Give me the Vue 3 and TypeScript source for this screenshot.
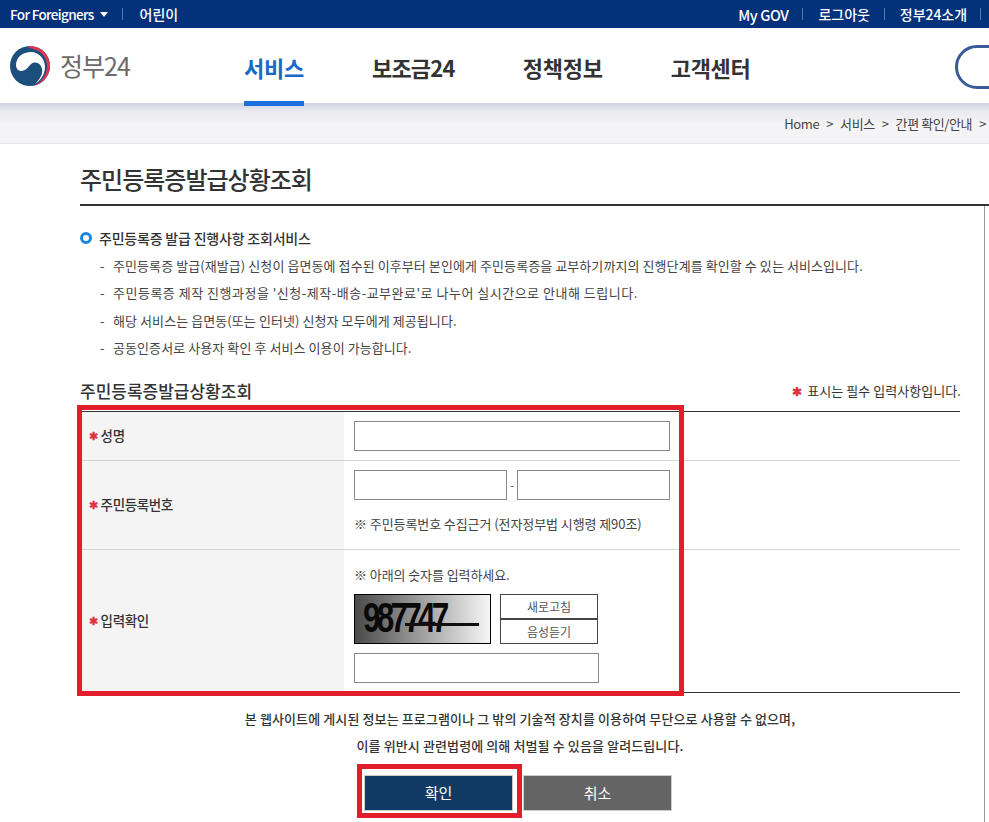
<script setup lang="ts">
const notes: string[] = [
  '주민등록증 발급(재발급) 신청이 읍면동에 접수된 이후부터 본인에게 주민등록증을 교부하기까지의 진행단계를 확인할 수 있는 서비스입니다.',
  "주민등록증 제작 진행과정을 '신청-제작-배송-교부완료'로 나누어 실시간으로 안내해 드립니다.",
  '해당 서비스는 읍면동(또는 인터넷) 신청자 모두에게 제공됩니다.',
  '공동인증서로 사용자 확인 후 서비스 이용이 가능합니다.',
]
const navItems: string[] = ['서비스', '보조금24', '정책정보', '고객센터']
</script>

<template>
  <div class="page">
    <div class="topbar">
      <div class="top-left">
        <span class="foreign">For Foreigners</span>
        <span class="caret"></span>
        <span class="sep"></span>
        <span>어린이</span>
      </div>
      <div class="top-right">
        <span class="mygov">My GOV</span><span class="sep"></span>
        <span>로그아웃</span><span class="sep"></span>
        <span>정부24소개</span><span class="sep"></span>
      </div>
    </div>

    <header class="header">
      <div class="logo">
        <svg width="42" height="42" viewBox="0 0 42 42">
          <circle cx="21" cy="21" r="20" fill="#1d4f7c" />
          <path d="M20 1C31 .5 41 9.500 41 21c0 9-6.500 17.500-17 20 8.500-3.500 14-11 14-20C38 11 30 4 20 3z" fill="#e3344f" />
          <path d="M7 20C7 12 14 7 22 7c8 0 14 7 14 15 0 7-4 13-10 17 5-5 8-10 7-15-1-6-7-8-11-5-3 3-5 7-10 7-3 0-5-3-5-6z" fill="#fff" />
        </svg>
        <span class="logo-text">정부24</span>
      </div>
      <nav class="nav">
        <a v-for="(item, i) in navItems" :key="item" class="nav-item" :class="{ active: i === 0 }">{{ item }}</a>
      </nav>
      <div class="search"></div>
    </header>

    <div class="crumbs">
      <span>Home</span><i>&gt;</i><span>서비스</span><i>&gt;</i><span>간편 확인/안내</span><i>&gt;</i>
    </div>

    <main class="main">
      <h1 class="title">주민등록증발급상황조회</h1>
      <div class="body">
        <div class="content">
          <div class="lead"><span class="dot"></span>주민등록증 발급 진행사항 조회서비스</div>
          <ul class="notes">
            <li v-for="n in notes" :key="n"><span class="dash">-</span>{{ n }}</li>
          </ul>

          <div class="form-head">
            <h2>주민등록증발급상황조회</h2>
            <span class="req"><b class="star">✱</b> 표시는 필수 입력사항입니다.</span>
          </div>

          <div class="table">
            <div class="row r1">
              <div class="th"><b class="star">✱</b>성명</div>
              <div class="td"><input class="inp w316" type="text" /></div>
            </div>
            <div class="row r2">
              <div class="th"><b class="star">✱</b>주민등록번호</div>
              <div class="td">
                <div class="ids"><input class="inp w153" type="text" /><span class="hy">-</span><input class="inp w153" type="text" /></div>
                <p class="hint">※ 주민등록번호 수집근거 (전자정부법 시행령 제90조)</p>
              </div>
            </div>
            <div class="row r3">
              <div class="th"><b class="star">✱</b>입력확인</div>
              <div class="td">
                <p class="hint first">※ 아래의 숫자를 입력하세요.</p>
                <div class="captcha-row">
                  <div class="captcha">
                    <span class="digits">987747</span>
                    <span class="strike"></span>
                  </div>
                  <div class="cap-btns">
                    <button type="button">새로고침</button>
                    <button type="button">음성듣기</button>
                  </div>
                </div>
                <input class="inp w245" type="text" />
              </div>
            </div>
            <div class="mark mark-table"></div>
          </div>

          <p class="legal">본 웹사이트에 게시된 정보는 프로그램이나 그 밖의 기술적 장치를 이용하여 무단으로 사용할 수 없으며,</p>
          <p class="legal second">이를 위반시 관련법령에 의해 처벌될 수 있음을 알려드립니다.</p>

          <div class="actions">
            <button type="button" class="btn ok">확인<span class="mark mark-btn"></span></button>
            <button type="button" class="btn cancel">취소</button>
          </div>
        </div>
      </div>
    </main>
  </div>
</template>

<style>
html, body { margin: 0; padding: 0; background: #fff; overflow: hidden; }
</style>

<style scoped>
.page {
  width: 989px;
  height: 822px;
  overflow: hidden;
  font-family: "Noto Sans CJK KR", "Noto Sans", sans-serif;
  color: #333;
  font-size: 12px;
}
.topbar {
  height: 28px;
  background: #03317a;
  color: #fff;
  display: flex;
  justify-content: space-between;
  align-items: center;
  padding: 0 8px 0 10px;
  font-size: 14px;
  font-weight: 500;
  letter-spacing: -0.05px;
}
.top-left, .top-right { display: flex; align-items: center; }
.foreign { font-size: 13.500px; letter-spacing: -0.65px; }
.mygov { font-size: 14.500px; letter-spacing: -0.4px; }
.caret {
  margin-left: 6px;
  border-left: 4px solid transparent;
  border-right: 4px solid transparent;
  border-top: 5px solid #fff;
}
.top-left .sep { margin: 0 17px 0 14px; }
.sep { width: 1px; height: 12px; background: #5a77a6; display: inline-block; }
.top-right .sep { margin: 0 15px 0 14px; }
.top-right .sep:last-child { margin: 0 0 0 13px; }
.header {
  height: 75px;
  background: #fff;
  display: flex;
  position: relative;
}
.logo { display: flex; align-items: center; width: 244px; padding: 0 0 0 9px; box-sizing: border-box; height: 75px; }
.logo svg { margin-top: 1px; }
.logo-text { margin-left: 9px; font-size: 25px; color: #6b6b6b; letter-spacing: -1px; margin-top: -2px; }
.nav { display: flex; gap: 68px; height: 78px; position: relative; z-index: 2; }
.nav-item {
  font-size: 22px;
  font-weight: 700;
  color: #333;
  line-height: 79px;
  box-sizing: border-box;
  height: 78px;
  letter-spacing: -0.25px;
}
.nav-item:nth-child(2) { letter-spacing: -0.8px; }
.nav-item.active { color: #1a68c9; border-bottom: 5px solid #1a6fdc; }
.search {
  position: absolute;
  left: 955px;
  top: 17px;
  width: 80px;
  height: 44px;
  border: 3px solid #3b5a9a;
  border-radius: 22px;
  box-sizing: border-box;
}
.crumbs {
  height: 41px;
  box-sizing: border-box;
  background: linear-gradient(#ced2de 0, #e9eaef 8px, #f4f3f5 20px);
  border-bottom: 1px solid #e6e6e6;
  display: flex;
  justify-content: flex-end;
  align-items: center;
  padding: 1px 3px 0 0;
  font-size: 13px;
  color: #444;
  letter-spacing: -0.4px;
}
.crumbs i { font-style: normal; margin: 0 7px; }
.crumbs i:last-child { margin-right: 0; }
.main { padding: 0 0 0 80px; }
.title {
  margin: 0;
  height: 62px;
  box-sizing: border-box;
  border-bottom: 2px solid #333;
  font-size: 24px;
  font-weight: 500;
  letter-spacing: -1px;
  color: #333;
  line-height: 69px;
}
.body { border-right: 1px solid #999; margin-right: 4px; height: 700px; padding-top: 21px; box-sizing: border-box; }
.content { width: 880px; position: relative; }
.lead {
  display: flex;
  align-items: center;
  font-size: 14px;
  font-weight: 500;
  color: #333;
  height: 22px;
  letter-spacing: -0.2px;
}
.dot {
  width: 12px;
  height: 12px;
  border: 3px solid #1a86e0;
  border-radius: 50%;
  box-sizing: border-box;
  margin-right: 7px;
}
.notes { list-style: none; margin: 3px 0 0; padding: 0 0 0 20px; }
.notes li { height: 27.4px; line-height: 27px; font-size: 13px; color: #444; letter-spacing: 0.08px; white-space: nowrap; }
.notes li:nth-child(2) { letter-spacing: 0.5px; }
.dash { display: inline-block; width: 13px; }
.form-head {
  display: flex;
  justify-content: space-between;
  align-items: flex-start;
  margin-top: 16px;
  height: 33px;
}
.form-head h2 { margin: 0; font-size: 17px; line-height: 26px; font-weight: 500; color: #333; }
.req { font-size: 13px; line-height: 26px; color: #333; letter-spacing: 0.05px; margin-right: -1px; }
.star { color: #e0323f; font-size: 11px; margin-right: 2px; font-weight: 700; }
.req .star { font-size: 12px; }
.th .star { margin-right: 3px; }
.table {
  position: relative;
  border-top: 1px solid #333;
  border-bottom: 1px solid #333;
}
.row { display: flex; border-bottom: 1px solid #d4d4d4; box-sizing: border-box; }
.row:nth-child(3) { border-bottom: 0; }
.r1 { height: 49px; }
.r2 { height: 89px; }
.r3 { height: 142px; }
.th {
  width: 264px;
  background: #f4f4f4;
  display: flex;
  align-items: center;
  padding: 0 0 2px 9px;
  box-sizing: border-box;
  font-size: 13.500px;
  font-weight: 500;
  color: #333;
  letter-spacing: -0.4px;
}
.td { padding: 9px 10px; flex: 1; box-sizing: border-box; }
.inp {
  height: 30px;
  border: 1px solid #888;
  box-sizing: border-box;
  display: block;
  padding: 0;
  background: #fff;
  outline: none;
}
.w316 { width: 316px; }
.w153 { width: 153px; }
.w245 { width: 245px; }
.ids { display: flex; align-items: center; }
.hy { width: 10px; text-align: center; color: #555; }
.hint { margin: 15px 0 0; font-size: 13px; line-height: 18px; color: #444; letter-spacing: -0.08px; }
.hint.first { margin: 7px 0 0; }
.captcha-row { display: flex; margin-top: 10px; }
.captcha {
  width: 137px;
  height: 50px;
  box-sizing: border-box;
  border: 1px solid #000;
  background: linear-gradient(90deg, #4a4a4a, #f6f6f6);
  position: relative;
  overflow: hidden;
  margin-right: 9px;
}
.digits {
  position: absolute;
  left: 8px;
  top: 0;
  font: 700 42px/46px "Liberation Sans", sans-serif;
  letter-spacing: -5px;
  color: #0a0a0a;
  transform: scaleX(0.75);
  transform-origin: left center;
}
.strike { position: absolute; left: 50px; top: 28px; width: 74px; height: 3px; background: #111; }
.cap-btns { display: flex; flex-direction: column; }
.cap-btns button {
  width: 98px;
  height: 25px;
  border: 1px solid #444;
  background: #fff;
  font: 12px "Noto Sans CJK KR", sans-serif;
  color: #555;
  padding: 0;
}
.r3 .inp { margin-top: 9px; }
.mark { position: absolute; border: 5px solid #e31e2c; box-sizing: border-box; pointer-events: none; }
.mark-table { left: -3px; top: -7px; width: 607px; height: 291px; }
.legal {
  margin: 17px 0 0;
  text-align: center;
  font-size: 13px;
  line-height: 18px;
  color: #333;
  letter-spacing: 0.11px;
  font-weight: 500;
}
.legal.second { margin-top: 9px; }
.actions { display: flex; margin: 20px 0 0 284px; gap: 10px; }
.btn {
  width: 149px;
  height: 36px;
  border: 1px solid #ccc;
  box-sizing: border-box;
  color: #fff;
  font: 400 15px "Noto Sans CJK KR", sans-serif;
  position: relative;
  padding: 0;
}
.ok { background: #103a63; }
.cancel { background: #646464; }
.mark-btn { left: -8px; top: -12px; width: 165px; height: 54px; }
</style>
